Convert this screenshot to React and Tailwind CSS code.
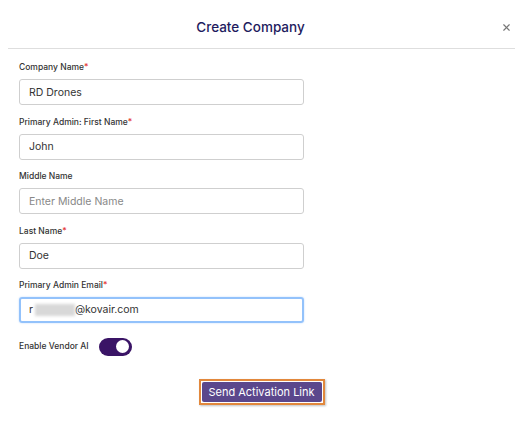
import { X } from "lucide-react";

const fields = [
  { label: "Company Name", required: true, value: "RD Drones" },
  { label: "Primary Admin: First Name", required: true, value: "John" },
  { label: "Middle Name", required: false, value: "", placeholder: "Enter Middle Name" },
  { label: "Last Name", required: true, value: "Doe" },
];

function Field({ label, required, children }) {
  return (
    <div className="flex flex-col">
      <label className="h-3 text-[8.5px] leading-3 font-medium text-[#333]">
        {label}
        {required && <span className="text-[#e53935]">*</span>}
      </label>
      <div className="mt-[6px]">{children}</div>
    </div>
  );
}

export default function App() {
  return (
    <div
      className="w-[523px] h-[424px] bg-white overflow-hidden"
      style={{ fontFamily: "Inter, 'Noto Sans', sans-serif" }}
    >
      <div className="relative mx-2 pr-[22px] h-[49px] flex items-center justify-center border-b border-[#dedede]">
        <h2 className="text-[13.5px] font-medium text-[#1e1b5e] pt-[6px]">Create Company</h2>
        <X className="absolute right-[3px] top-[22px] w-[11px] h-[11px] text-[#777]" strokeWidth={2.5} />
      </div>

      <div className="px-[19px] pt-[12px] flex flex-col gap-[10.5px]">
        {fields.map((f) => (
          <Field key={f.label} label={f.label} required={f.required}>
            <input
              readOnly
              value={f.value}
              placeholder={f.placeholder}
              className="block w-[285px] h-[26px] px-[9px] text-[10.5px] text-[#333] placeholder:text-[#888] border border-[#cfcfcf] rounded-[3px] outline-none"
            />
          </Field>
        ))}
        <Field label="Primary Admin Email" required>
          <div className="w-[285px] h-[26px] px-[8px] flex items-center text-[10.5px] text-[#333] border-2 border-[#93c2fb] rounded-[3px] shadow-[0_0_2px_#bcd9fd]">
            <span>r</span>
            <span className="ml-[2px] w-[40px] h-[12px] bg-[#d8d8d8] blur-[1.5px]" />
            <span>@kovair.com</span>
          </div>
        </Field>

        <div className="mt-[4px] flex items-center gap-[10px]">
          <span className="text-[8.5px] font-medium text-[#333]">Enable Vendor AI</span>
          <div className="w-[33px] h-[18px] rounded-full bg-[#3a1466] flex items-center justify-end px-[3px]">
            <div className="w-[13px] h-[13px] rounded-full bg-white" />
          </div>
        </div>

        <div className="mt-[13px] flex justify-center">
          <div className="border-2 border-[#e2883c] p-[1px] shadow-[1px_1px_2px_rgba(0,0,0,0.25)]">
            <button className="w-[120px] h-[20px] bg-[#5b478c] text-white text-[11px] rounded-[2px] flex items-center justify-center">
              Send Activation Link
            </button>
          </div>
        </div>
      </div>
    </div>
  );
}
